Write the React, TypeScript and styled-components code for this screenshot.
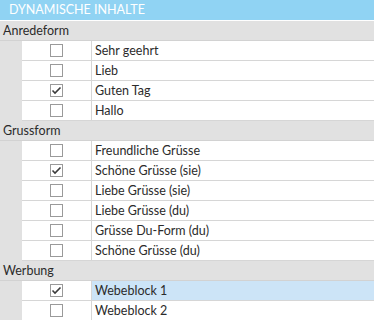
import React from 'react';
import styled, { createGlobalStyle } from 'styled-components';

const GlobalStyle = createGlobalStyle`
  html, body {
    margin: 0;
    padding: 0;
    background: #ffffff;
    overflow: hidden;
  }
  * {
    box-sizing: border-box;
  }
`;

const Panel = styled.div`
  width: 374px;
  font-family: "Segoe UI", Lato, "Open Sans", sans-serif;
  font-size: 12.5px;
  color: #2b2b2b;
`;

const Header = styled.div`
  height: 21px;
  background: #90d3f3;
  border-bottom: 1px solid #ffffff;
  color: #ffffff;
  padding-left: 9px;
  line-height: 20px;
  font-size: 12.5px;
`;

const GroupTitle = styled.div`
  height: 20px;
  background: #e1e1e1;
  border-bottom: 1px solid #d2d2d2;
  padding-left: 3px;
  line-height: 19px;
`;

const Row = styled.div`
  display: grid;
  grid-template-columns: 22px 70px 1fr;
  height: 20px;
`;

const Gutter = styled.div`
  background: #e1e1e1;
`;

const CheckCell = styled.div`
  display: flex;
  align-items: center;
  justify-content: center;
  border-bottom: 1px solid #d6d6d6;
  border-right: 1px solid #d6d6d6;
  padding-bottom: 1px;
`;

const Label = styled.div<{ $selected?: boolean }>`
  border-bottom: 1px solid #d6d6d6;
  background: ${(p) => (p.$selected ? '#cce4f7' : '#ffffff')};
  padding-left: 3px;
  line-height: 19px;
  white-space: nowrap;
`;

const Box = styled.div`
  width: 13px;
  height: 13px;
  border: 1px solid #9a9a9a;
  background: #ffffff;
  display: flex;
  align-items: center;
  justify-content: center;
`;

const Check = () => (
  <svg width="11" height="11" viewBox="0 0 11 11">
    <path d="M1.5 5.5 L4 8 L9.5 2.5" fill="none" stroke="#3c3c3c" strokeWidth="1.6" />
  </svg>
);

type Item = { label: string; checked?: boolean; selected?: boolean };

const groups: { title: string; items: Item[] }[] = [
  {
    title: 'Anredeform',
    items: [
      { label: 'Sehr geehrt' },
      { label: 'Lieb' },
      { label: 'Guten Tag', checked: true },
      { label: 'Hallo' },
    ],
  },
  {
    title: 'Grussform',
    items: [
      { label: 'Freundliche Grüsse' },
      { label: 'Schöne Grüsse (sie)', checked: true },
      { label: 'Liebe Grüsse (sie)' },
      { label: 'Liebe Grüsse (du)' },
      { label: 'Grüsse Du-Form (du)' },
      { label: 'Schöne Grüsse (du)' },
    ],
  },
  {
    title: 'Werbung',
    items: [
      { label: 'Webeblock 1', checked: true, selected: true },
      { label: 'Webeblock 2' },
    ],
  },
];

export default function App() {
  return (
    <>
      <GlobalStyle />
      <Panel>
        <Header>DYNAMISCHE INHALTE</Header>
        {groups.map((g) => (
          <div key={g.title}>
            <GroupTitle>{g.title}</GroupTitle>
            {g.items.map((it) => (
              <Row key={it.label}>
                <Gutter />
                <CheckCell>
                  <Box>{it.checked && <Check />}</Box>
                </CheckCell>
                <Label $selected={it.selected}>{it.label}</Label>
              </Row>
            ))}
          </div>
        ))}
      </Panel>
    </>
  );
}
